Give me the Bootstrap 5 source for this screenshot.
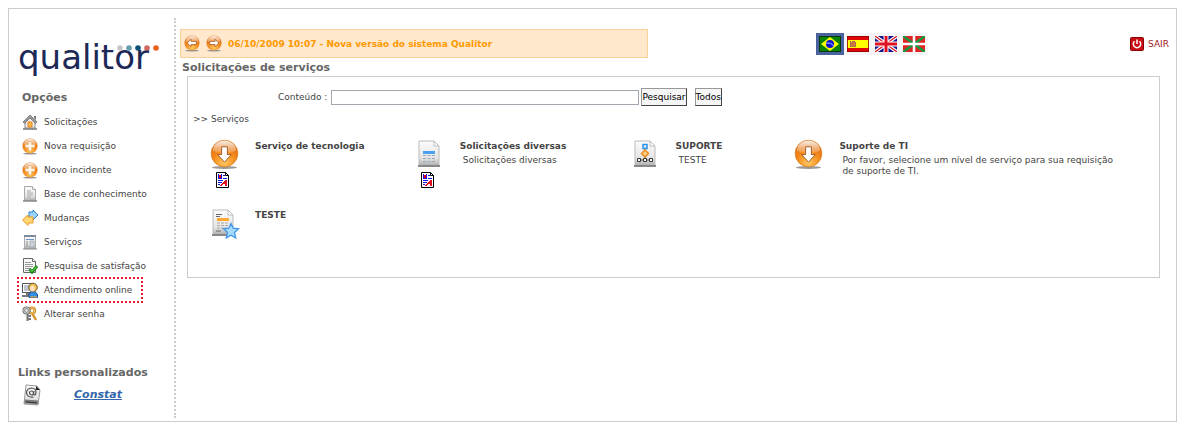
<!DOCTYPE html>
<html lang="pt-BR">
<head>
<meta charset="utf-8">
<meta name="viewport" content="width=device-width, initial-scale=1">
<title>Qualitor - Solicitações de serviços</title>
<link href="https://cdn.jsdelivr.net/npm/bootstrap@5.3.0/dist/css/bootstrap.min.css" rel="stylesheet">
<style>
  body { font: 9px/12px "DejaVu Sans", Verdana, sans-serif; color: #444; background: #fff; }
  svg { display: block; flex: none; }
  .frame { margin: 8px 6px 4px 8px; border: 1px solid #ccc; }
  .sidebar { width: 167px; margin: 9px 0 3px; border-right: 2px dotted #ccc; padding: 0 0 12px 9px; flex: none; }
  .brand { height: 61px; padding-top: 19px; color: #1c2957; position: relative; width: 152px; }
  .brand-name { font-size: 34px; line-height: 40px; display: block; }
  .brand-dots { position: absolute; top: 27px; right: 11px; }
  .heading { font-size: 11px; line-height: 14px; font-weight: 700; color: #666; margin: 0; }
  .menu { padding-top: 5px; }
  .menu a { height: 24px; padding: 0 10px 0 4px; width: fit-content; gap: 6px; color: #444; }
  .menu a.current { outline: 2px dotted #e0202c; outline-offset: -1px; }
  .custom-link { font-size: 11px; line-height: 14px; font-weight: 700; font-style: italic; color: #36a; }
  .topbar { margin-top: 20px; height: 29px; }
  .notice { width: 468px; background: #ffe8cc; border: 1px solid #fbd09a; color: #f90; font-weight: 700; gap: 5px; padding: 0 3px; }
  .notice button, .langs button { border: 0; background: none; padding: 0; }
  .notice button { width: 17px; }
  .langs { margin-left: 168px; background: #f5f5f5; height: 22px; }
  .langs button { padding: 3px; }
  .langs .active { background: #4a63a0; }
  .logout { color: #a01818; gap: 4px; margin-right: 7px; }
  .title-row { padding: 3px 0 0 2px; }
  .panel { margin: 1px 16px 0 7px; border: 1px solid #ccc; padding: 11px 0 0; }
  .search { padding-left: 90px; }
  .search input { width: 308px; height: 15px; border: 1px solid #a0a7af; padding: 0 2px; margin: 0 2px 0 4px; }
  .search button { height: 18px; padding: 0; border: 1px solid #999; border-right-color: #444; border-bottom-color: #444; background: #f5f5f5; color: #000; }
  .crumb { padding: 7px 0 0 5px; }
  .services { display: grid; grid-template-columns: 205fr 216fr 164fr 365fr; padding: 14px 0 0 22px; }
  .service { min-height: 69px; }
  .service-icon { width: 45px; flex: none; }
  .service-icon .doc-mark { margin: 2px 0 0 6px; }
  .service h2 { font-size: 9px; line-height: 12px; font-weight: 700; margin: 1px 0 3px; }
  .service p { line-height: 11px; margin: 0 0 0 3px; max-width: 275px; }
</style>
</head>
<body>
<svg width="0" height="0" class="position-absolute" aria-hidden="true">
  <defs>
    <radialGradient id="ball" cx=".5" cy=".85" r=".85"><stop offset="0" stop-color="#ffc861"/><stop offset=".5" stop-color="#f58a1c"/><stop offset="1" stop-color="#d9650a"/></radialGradient>
    <linearGradient id="shine" x2="0" y2="1"><stop offset="0" stop-color="#fff" stop-opacity=".9"/><stop offset="1" stop-color="#fff" stop-opacity=".15"/></linearGradient>
    <linearGradient id="paper" x2="0" y2="1"><stop offset="0" stop-color="#fcfcfc"/><stop offset=".7" stop-color="#e4e4e4"/><stop offset="1" stop-color="#aaa"/></linearGradient>
    <symbol id="orb" viewBox="0 0 30 32"><ellipse cx="15" cy="29.500" rx="13" ry="1.500" fill="#999"/><circle cx="15" cy="15" r="13.800" fill="url(#ball)" stroke="#d8812c" stroke-width=".8"/><path d="M3 12a12 10.500 0 0 1 24 0q-12 5-24 0z" fill="url(#shine)"/></symbol>
    <symbol id="down" viewBox="0 0 30 32"><use href="#orb"/><path d="M12 8h6v8h4l-7 8-7-8h4z" fill="#fff" stroke="#a85a28"/></symbol>
    <symbol id="plus" viewBox="0 0 30 32"><use href="#orb"/><path d="M12 7h6v5h6v6h-6v6h-6v-6H6v-6h6z" fill="#fff" fill-opacity=".92" stroke="#eba45c"/></symbol>
    <symbol id="arrow" viewBox="0 0 30 32"><use href="#orb"/><path d="M6 15l7-7v4h10v6H13v4z" fill="#fff" stroke="#a85a28" stroke-width="1.500"/></symbol>
    <symbol id="docmark" viewBox="0 0 13 16"><path d="M.5.5h9l3 3v12H.5z" fill="#fff" stroke="#000"/><path d="M9.500.500v3h3" fill="none" stroke="#000"/><g shape-rendering="crispEdges"><path d="M3 3h2v3H3z" fill="#e00"/><path d="M2 2h1v4H2zM5 2h1v4H5zM2 6h4v1H2zM7 3h2v1H7zM7 6h4v1H7zM2 8h5v1H2zM2 10h4v1H2zM2 12h2v1H2z" fill="#11d"/><path d="M9 8h2v6H9v-2H7v1H6v1H4v-1h1v-1h1v-1h1v-1h1V9h1z" fill="#e01020"/></g></symbol>
    <symbol id="sheet" viewBox="0 0 24 28"><path d="M2 1h15l5 5v20H2z" fill="url(#paper)" stroke="#bbb"/><path d="M17 1v5h5z" fill="#fff" stroke="#bbb"/><path d="M1 25h22v2H1z" fill="#888"/></symbol>
  </defs>
</svg>

<div class="frame d-flex">
  <aside class="sidebar">
    <div class="brand"><span class="brand-name">qualitor</span>
      <svg class="brand-dots" width="42" height="6"><circle cx="3" cy="3" r="2.800" fill="#c5c6c8"/><circle cx="12" cy="3" r="2.800" fill="#659daa"/><circle cx="21" cy="3" r="2.800" fill="#0b5274"/><circle cx="30" cy="3" r="2.800" fill="#cc6961"/><circle cx="39" cy="3" r="2.800" fill="#eb6020"/></svg>
    </div>
    <h2 class="heading mt-2 pt-1 ms-1">Opções</h2>
    <nav class="menu d-flex flex-column">
      <a href="#" class="d-flex align-items-center text-decoration-none"><svg width="16" height="16" viewBox="0 0 16 16"><path d="M3 8v6h10V8L8 3z" fill="#eee" stroke="#888"/><path d="M1 8l7-7 7 7-1.500 1.500L8 4 2.500 9.500z" fill="#999" stroke="#666" stroke-width=".7"/><path d="M12 2h2v4l-2-2z" fill="#777"/><path d="M6 8h4v5H6z" fill="#ffb84d" stroke="#e8851c"/><path d="M1 15h14" stroke="#777" stroke-width="1.500"/></svg>Solicitações</a>
      <a href="#" class="d-flex align-items-center text-decoration-none"><svg width="16" height="17"><use href="#plus"/></svg>Nova requisição</a>
      <a href="#" class="d-flex align-items-center text-decoration-none"><svg width="16" height="17"><use href="#plus"/></svg>Novo incidente</a>
      <a href="#" class="d-flex align-items-center text-decoration-none"><svg width="16" height="16" viewBox="0 0 16 16"><path d="M2.500.500h8l3 3v11h-11z" fill="url(#paper)" stroke="#aaa"/><path d="M10.500.500v3h3" fill="#fff" stroke="#aaa"/><path d="M5 5h4M5 7h6M5 9h6M5 11h4" stroke="#aaa"/><path d="M1 15h14" stroke="#888" stroke-width="1.500"/></svg>Base de conhecimento</a>
      <a href="#" class="d-flex align-items-center text-decoration-none"><svg width="16" height="16" viewBox="0 0 16 16"><path d="M7 2h4V0l5 5-5 5V8H7z" fill="#9dd4fb" stroke="#2680d4"/><path d="M10 7H6V5L.500 10 6 15.500V13h5V7z" fill="#ffd772" stroke="#e99a22"/></svg>Mudanças</a>
      <a href="#" class="d-flex align-items-center text-decoration-none"><svg width="16" height="16" viewBox="0 0 16 16"><path d="M2.500 1.500h11v13h-11z" fill="url(#paper)" stroke="#aaa"/><path d="M2 1h12v2H2z" fill="#7c8ca0"/><path d="M4 5.500h8" stroke="#6c94c4"/><path d="M4 8h2M4 10h2M4 12h2" stroke="#888"/><path d="M8 7h4v6H8z" fill="#ccd5df" stroke="#999" stroke-width=".6"/><path d="M1 15h14" stroke="#888"/></svg>Serviços</a>
      <a href="#" class="d-flex align-items-center text-decoration-none"><svg width="16" height="16" viewBox="0 0 16 16"><path d="M1.500.500h9l3 3v11h-12z" fill="#f8f8f8" stroke="#666"/><path d="M10.500.500v3h3" fill="#fff" stroke="#666"/><path d="M3 4.500h6M3 6.500h8M3 8.500h8M3 10.500h5M3 12.500h5" stroke="#999"/><path d="M7.500 11l2.500 3 5-6" fill="none" stroke="#187b18" stroke-width="3"/><path d="M8 11.500l2 2 4.500-5" fill="none" stroke="#54c83c" stroke-width="1.200"/></svg>Pesquisa de satisfação</a>
      <a href="#" class="current d-flex align-items-center text-decoration-none"><svg width="16" height="16" viewBox="0 0 16 16"><path d="M.500 1.500h10v9h-10z" fill="#fff" stroke="#555"/><path d="M2 3h6v6H2z" fill="#bfc8d2"/><path d="M4 11h3v2H4zM0 13h8v2H0z" fill="#777"/><path d="M7 15.500v-3l2-3h4l2.500 3v3z" fill="#318ee5" stroke="#164e9a"/><circle cx="11" cy="5.500" r="4.300" fill="#f3bc48" stroke="#665536"/><ellipse cx="10.500" cy="6.500" rx="2.300" ry="3" fill="#ffe4c4"/><path d="M8 15h7" stroke="#ffb52c"/></svg>Atendimento online</a>
      <a href="#" class="d-flex align-items-center text-decoration-none"><svg width="16" height="16" viewBox="0 0 16 16"><g fill="none"><circle cx="10" cy="4.500" r="2.800" stroke="#c9851b" stroke-width="2.600"/><path d="M10 7l4 7" stroke="#d8942a" stroke-width="2.500"/><circle cx="10" cy="4.500" r="2.800" stroke="#ffd174"/><circle cx="4.500" cy="4.500" r="2.700" stroke="#777" stroke-width="2.800"/><path d="M5.500 7v8M6 10h3M6 13h3" stroke="#777" stroke-width="2"/><circle cx="4.500" cy="4.500" r="2.700" stroke="#ddd"/></g></svg>Alterar senha</a>
    </nav>
    <h2 class="heading mt-4 pt-3">Links personalizados</h2>
    <div class="d-flex align-items-center mt-1 ms-1">
      <svg width="20" height="22" viewBox="0 0 20 22"><path d="M4 1l11 1 3 4-2 15-14-1z" fill="url(#paper)" stroke="#999"/><path d="M14 2l4 4h-4z" fill="#222"/><g fill="none" stroke="#555" stroke-width="1.200"><circle cx="9.500" cy="9" r="2"/><path d="M12 7l-.5 3q.5 1.500 2 .5 2-6-4-6.500-5 .5-5 5 1 5 7 4"/></g><path d="M3 15.500l13 1-.500 3.500L2.500 19z" fill="#777"/><path d="M4 18l11 1" stroke="#333"/></svg>
      <a href="#" class="custom-link ms-4 ps-2">Constat</a>
    </div>
  </aside>

  <main class="flex-grow-1 ms-1">
    <div class="topbar d-flex align-items-center">
      <div class="notice d-flex align-items-center align-self-stretch">
        <button type="button" aria-label="Anterior"><svg width="16" height="17"><use href="#arrow"/></svg></button>
        <button type="button" aria-label="Próxima"><svg width="16" height="17" viewBox="0 0 30 32"><use href="#orb"/><path d="M24 15l-7-7v4H7v6h10v4z" fill="#fff" stroke="#a85a28" stroke-width="1.500"/></svg></button>
        <span>06/10/2009 10:07 - Nova versão do sistema Qualitor</span>
      </div>
      <div class="langs d-flex">
        <button type="button" class="active" aria-label="Português"><svg width="22" height="16" viewBox="0 0 22 16"><path d="M0 0h22v16H0z" fill="#078407"/><path d="M2 8l9-7 9 7-9 7z" fill="#ff0"/><circle cx="11" cy="8" r="4" fill="#1212d0"/><path d="M7 7q5-1 8 3" fill="none" stroke="#9cf"/><path d="M.5.5h21v15H.5z" fill="none" stroke="#043c04"/></svg></button>
        <button type="button" aria-label="Español"><svg width="22" height="16" viewBox="0 0 22 16"><path d="M0 0h22v16H0z" fill="#e00808"/><path d="M0 4h22v8H0z" fill="#ff0"/><path d="M4 6h4v5H4z" fill="#c57949"/><path d="M3.500 5v6M8.500 6v5M5 5.500h3" stroke="#b76545"/><path d="M.5.5h21v15H.5z" fill="none" stroke="#800" stroke-opacity=".8"/></svg></button>
        <button type="button" aria-label="English"><svg width="22" height="16" viewBox="0 0 22 16"><path d="M0 0h22v16H0z" fill="#12128c"/><path d="M0 0l22 16M22 0L0 16" stroke="#fff" stroke-width="3.500"/><path d="M0 0l22 16M22 0L0 16" stroke="#e01020" stroke-width="1.200"/><path d="M11 0v16M0 8h22" stroke="#fff" stroke-width="5"/><path d="M11 0v16M0 8h22" stroke="#e01020" stroke-width="3"/></svg></button>
        <button type="button" aria-label="Euskara"><svg width="22" height="16" viewBox="0 0 22 16"><path d="M0 0h22v16H0z" fill="#e02424"/><path d="M0 0l22 16M22 0L0 16" stroke="#129a44" stroke-width="2.500"/><path d="M11 0v16M0 8h22" stroke="#fff" stroke-width="2.500"/></svg></button>
      </div>
      <a href="#" class="logout d-flex align-items-center text-decoration-none ms-auto"><svg width="14" height="14" viewBox="0 0 14 14"><rect x=".5" y=".5" width="13" height="13" rx="1" fill="#c80f14" stroke="#800"/><path d="M4.500 4.200a3.700 3.700 0 1 0 5 0M7 2.500V7" fill="none" stroke="#fff" stroke-width="1.500"/></svg>SAIR</a>
    </div>
    <div class="title-row"><h1 class="heading">Solicitações de serviços</h1></div>
    <section class="panel">
      <form class="search d-flex align-items-center">
        <label for="conteudo">Conteúdo :</label>
        <input id="conteudo" type="text">
        <button type="button">Pesquisar</button>
        <button type="button" class="ms-2">Todos</button>
      </form>
      <div class="crumb">&gt;&gt; Serviços</div>
      <div class="services">
        <article class="service d-flex">
          <div class="service-icon"><svg width="29" height="31"><use href="#down"/></svg><svg class="doc-mark" width="13" height="16"><use href="#docmark"/></svg></div>
          <div><h2>Serviço de tecnologia</h2></div>
        </article>
        <article class="service d-flex">
          <div class="service-icon"><svg width="28" height="31" viewBox="-2 -1 28 31"><use href="#sheet" width="24" height="28"/><path d="M6 11h12v3H6z" fill="#4ba0ef"/><path d="M6 15.500h12M6 18.500h12M6 21.500h12" stroke="#9ab" stroke-dasharray="3 1.500"/></svg><svg class="doc-mark" width="13" height="16"><use href="#docmark"/></svg></div>
          <div><h2>Solicitações diversas</h2><p>Solicitações diversas</p></div>
        </article>
        <article class="service d-flex">
          <div class="service-icon"><svg width="28" height="31" viewBox="-2 -1 28 31"><use href="#sheet" width="24" height="28"/><path d="M12 8v12M5 20h14" stroke="#555"/><path d="M10 4.500h4v4h-4z" fill="#d5ecff" stroke="#2b93ed" stroke-width="1.500"/><path d="M12 10l3.500 3.500L12 17l-3.500-3.500z" fill="#ffd08a" stroke="#f08a1c" stroke-width="1.500"/><path d="M4.500 18.500h3v3h-3zM10.500 18.500h3v3h-3zM16.500 18.500h3v3h-3z" fill="#fff" stroke="#333"/></svg></div>
          <div><h2>SUPORTE</h2><p>TESTE</p></div>
        </article>
        <article class="service d-flex">
          <div class="service-icon"><svg width="29" height="31"><use href="#down"/></svg></div>
          <div><h2>Suporte de TI</h2><p>Por favor, selecione um nível de serviço para sua requisição de suporte de TI.</p></div>
        </article>
        <article class="service d-flex">
          <div class="service-icon"><svg width="30" height="32" viewBox="-2 -1 30 32"><use href="#sheet" width="24" height="28" x="-1"/><path d="M4 5.500h6M4 7.500h4M4 22h5" stroke="#666"/><path d="M5 9h12v3H5z" fill="#ffa832"/><path d="M5 14h12M5 16.500h12M5 19h9" stroke="#aaa" stroke-dasharray="3 1"/><path d="M19 14.500l2.200 4.700 5.300.6-4 3.600 1.200 5.600-4.700-2.800-4.700 2.800 1.200-5.600-4-3.600 5.300-.6z" fill="#a6dafc" stroke="#4097e8" stroke-width="1.300"/></svg></div>
          <div><h2>TESTE</h2></div>
        </article>
      </div>
    </section>
  </main>
</div>
<script src="https://cdn.jsdelivr.net/npm/bootstrap@5.3.0/dist/js/bootstrap.bundle.min.js"></script>
</body>
</html>
